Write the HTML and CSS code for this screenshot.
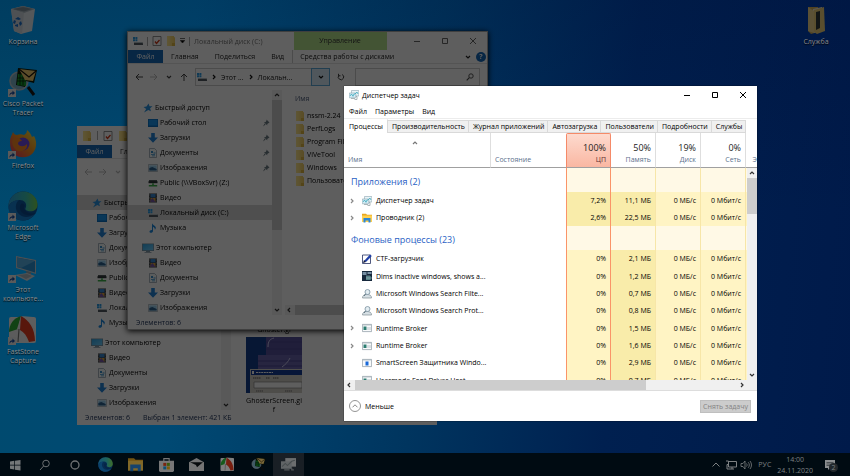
FILE: index.html
```html
<!DOCTYPE html>
<html lang="ru">
<head>
<meta charset="utf-8">
<meta name="viewport" content="width=device-width, initial-scale=1">
<title>Диспетчер задач</title>
<link rel="stylesheet" href="styles.css">
</head>
<body>
<svg class="defs" aria-hidden="true">
  <defs>
    <linearGradient id="g-edge" x1="0" y1="0" x2="1" y2="0"><stop offset="0" stop-color="#2aa8e8"/><stop offset=".6" stop-color="#3cc8b8"/><stop offset="1" stop-color="#7ddc50"/></linearGradient>
    <linearGradient id="g-fox" x1="1" y1="0" x2="0" y2="1"><stop offset="0" stop-color="#fff04a"/><stop offset=".45" stop-color="#ff9a1c"/><stop offset="1" stop-color="#f0306a"/></linearGradient>
    <linearGradient id="g-folder" x1="0" y1="0" x2="1" y2="0"><stop offset="0" stop-color="#ffe890"/><stop offset="1" stop-color="#f0cc60"/></linearGradient>
    <linearGradient id="g-screen" x1="0" y1="0" x2="1" y2="1"><stop offset="0" stop-color="#30a8e8"/><stop offset="1" stop-color="#70d0ff"/></linearGradient>
    <symbol id="shortcut" viewBox="0 0 8 8"><path d="M0 0h8v8H0z" fill="#f4f4f4"/><path d="M1.500 7c-.3-2.500 1-3.700 3-3.700V1.500L7 4 4.500 6.300V4.800C3.200 4.700 2.200 5.300 1.500 7z" fill="#1a50a8"/></symbol>
    <symbol id="bin" viewBox="0 0 30 30"><path d="M3 4l12-3 12 3-3 22-11 3-7-3z" fill="#e6edf2"/><path d="M3 4l12-3 12 3-11 4z" fill="#aebcc6"/><path d="M5 4l10-2 9 2-8 2.500z" fill="#82929d"/><path d="M16 8l-2 21-8-3L3 4z" fill="#d2dce3"/><path d="M7 14l3-2 3 2-2 1zM6 15l2 1-1 3-2-1zM13 16l1 3-2 2-1-3zM7 20l3-1v3l-3-1z" fill="#1c72d0"/></symbol>
    <symbol id="cisco" viewBox="0 0 30 30"><path d="M20 20l6 8" stroke="#151515" stroke-width="3"/><circle cx="11" cy="14" r="9" fill="#7eb4cc" stroke="#b9c9d0" stroke-width="1.500"/><path d="M10 1l19 2-3 13-8-2-1 6-9-2z" fill="#0b1a08"/><path d="M10 7l8 1v11l-9-1z" fill="#14a02c"/><path d="M12 7v11M15 7v11M9 11h9M9 14h9" stroke="#0b1a08" stroke-width=".8"/><path d="M11 2l17 2-3 10-8-1z" fill="#f5cf72"/><path d="M11 2l10 8 7-6" fill="none" stroke="#16120a" stroke-width="1.200"/></symbol>
    <symbol id="firefox" viewBox="0 0 30 30"><path d="M2 13C2 8 4 6 5 3c1 2 2 3 4 3 2-1 5-1 7 0 2-1 3-3 3-5 3 2 4 5 5 7l2-1c3 5 3 12-1 17-4 5-14 6-19 1-3-3-4-7-4-12z" fill="url(#g-fox)"/><circle cx="15" cy="15" r="6.500" fill="#7048e8"/><path d="M5 10c4-2 7-1 9 2-3 0-4 1-4 3 2 3 6 3 9 0 1 5-4 8-8 7-5-1-8-7-6-12z" fill="#ff8a24"/></symbol>
    <symbol id="edge" viewBox="0 0 30 30"><circle cx="15" cy="15" r="14.500" fill="#0c59a4"/><path d="M.5 16C0 7 7 .5 15 .5c9 0 15 7 14.500 14C29 19 25 21 20 20c-3-1-3-2-2-4 1-4-2-7-6-7C7 9 2 11 .5 16z" fill="url(#g-edge)"/><path d="M.5 17C1 12 6 9 11 9c-4 3-4 9-1 13 4 5 11 5 17 1-3 4-7 6.500-12 6.500C7 29.500 1 24 .5 17z" fill="#1684d8"/><path d="M13 13c-3 4 0 10 6 11 3 .5 6 0 9-2-5 1-9 0-11-3-2-2-1-3 0-4-1-2-2-3-4-2z" fill="#0b4a90"/></symbol>
    <symbol id="thispc" viewBox="0 0 30 30"><path d="M8 3l20 4v14L8 15z" fill="#c8d4dc"/><path d="M9 4.500l18 3.500v11.500L9 14z" fill="#2c94d8"/><path d="M9 4.500l18 3.500-14 7-4-1z" fill="#58b4ec"/><path d="M18 18l1 5h4v-4z" fill="#9eabb4"/><path d="M7 22l12-2 8 3-8 5z" fill="#dce3e8"/><path d="M10 22l9-1 5 2-6 3z" fill="#aebac2"/></symbol>
    <symbol id="fast" viewBox="0 0 30 30"><rect x="1" y="2" width="27" height="26" rx="2" fill="#f8f8f8"/><path d="M13 1C6 3 1 9 1 17l9-3z" fill="#2db335"/><path d="M13 1l-4 13 3 1 6-2z" fill="#f4f4f4"/><path d="M13 1l-1 14c4 2 7 6 9 12l6-1C27 14 21 5 13 1z" fill="#ee3d20"/><path d="M13 1c7 3 12 9 15 14V4l-3-2z" fill="#fff"/><path d="M11 14l-1 13" stroke="#808080" stroke-width="1.200"/></symbol>
    <symbol id="bigfolder" viewBox="0 0 30 30"><path d="M7 2h10v25l-7 2-3-3z" fill="#d8b45c"/><path d="M12 4l9-2v22l-8 4z" fill="#f7f4e4"/><path d="M13 5l10-3 1 24-8 3-3-2z" fill="#f1d37c"/><path d="M15 7l4-1v17l-4 2z" fill="#303838"/><path d="M7 2l6 4v22l-6-2z" fill="#f5dc92"/></symbol>
    <symbol id="star" viewBox="0 0 10 10"><path d="M5.500.5l1 2.700 3 .1-2.400 2 .8 3L5.300 7 1 9.500 3.200 6 .5 4l3-.5z" fill="#2892e0"/></symbol>
    <symbol id="desk" viewBox="0 0 10 10"><path d="M0 1h10v8H0z" fill="#0b6fc0"/><path d="M.7 1.700h8.600v5.800H.7z" fill="#1795ee"/></symbol>
    <symbol id="down" viewBox="0 0 10 10"><path d="M3.200 0h3.600v4.500H10L5 9.800 0 4.500h3.200z" fill="#2484d8"/></symbol>
    <symbol id="doc" viewBox="0 0 10 10"><path d="M1.500.5h5l2 2v7h-7z" fill="#f6fafc" stroke="#8798a4" stroke-width=".7"/><path d="M3 3h2v2H3zM5.500 4.500h2v1h-2zM3 6h4v.8H3zM4 7.500h3v.8H4z" fill="#3a8ecc"/></symbol>
    <symbol id="pic" viewBox="0 0 10 10"><path d="M.4 1.500h9.200v7H.4z" fill="#f3f7fa" stroke="#99a8b0" stroke-width=".7"/><path d="M1.300 2.400h7.400v5.200H1.300z" fill="#9ed4f4"/><path d="M1.300 5l3-1 4.400 2v1.600H1.300z" fill="#2b6090"/></symbol>
    <symbol id="net" viewBox="0 0 10 10"><path d="M1 2h8v3H1z" fill="#505a5c"/><path d="M.5 3.200h9v2h-9z" fill="#2b3436"/><path d="M4.200 5.200h1.600v2H4.200zM.8 7h8.400v1.600H.8z" fill="#3cb04a"/></symbol>
    <symbol id="video" viewBox="0 0 10 10"><path d="M1 .5h8v9H1z" fill="#303438"/><path d="M2.500 1h5v3.500h-5z" fill="#3686d0"/><path d="M2.500 5h5v4h-5z" fill="#dca43c"/><path d="M2.500 7l2-2 3 4h-5z" fill="#7858a8"/><path d="M1.700 1v8M8.300 1v8" stroke="#ddd" stroke-width=".6" stroke-dasharray=".7 .8"/></symbol>
    <symbol id="drive" viewBox="0 0 10 10"><path d="M0 1h2v2H0zM2.400 1h2v2h-2zM0 3.300h2v2H0zM2.400 3.300h2v2h-2z" fill="#2b9ee6"/><path d="M1 6h8l1 1.500V9H1z" fill="#505a60"/><path d="M1 6h8l.7 1H1z" fill="#b2bcc2"/></symbol>
    <symbol id="music" viewBox="0 0 10 10"><path d="M4 .3c.5 1.800 3 2 3.700 3.700.3 1-.1 2-.8 2.800.1-1.600-.8-2.300-1.900-2.700V8c0 1-.9 1.800-2 1.800S1.500 9.200 1.500 8.500 2.500 7 4 7.100z" fill="#1c8ae0"/></symbol>
    <symbol id="pc" viewBox="0 0 12 10"><path d="M0 .5h12v7.500H0z" fill="#7894a6"/><path d="M.8 1.200h10.400v6H.8z" fill="url(#g-screen)"/><path d="M4 8h4v1h1.500v.8h-7V9H4z" fill="#8298a4"/></symbol>
    <symbol id="folder" viewBox="0 0 10 10"><path d="M1 0h7v1l1 .5V10H1z" fill="url(#g-folder)"/><path d="M6 7h3v3H6z" fill="#e0b840"/></symbol>
    <symbol id="check" viewBox="0 0 10 10"><path d="M1 .5h8v9H1z" fill="#fff" stroke="#777" stroke-width=".8"/><path d="M3 5.500l1.500 2L7.500 4" fill="none" stroke="#d03818" stroke-width="1.300"/></symbol>
    <symbol id="pin" viewBox="0 0 8 8"><path d="M4.500.5l3 3-.8.4-1.500 1 .1 1.600L2 3.200l1.700-.1L4.500 1.500zM2.600 4.500l1 1L1 7.500z" fill="#6c7c84"/></symbol>
    <symbol id="left" viewBox="0 0 8 8"><path d="M4 1L1 4l3 3M1 4h7" fill="none" stroke="currentColor"/></symbol>
    <symbol id="right" viewBox="0 0 8 8"><path d="M4 1l3 3-3 3M0 4h7" fill="none" stroke="currentColor"/></symbol>
    <symbol id="up" viewBox="0 0 8 8"><path d="M1 4l3-3 3 3M4 1v7" fill="none" stroke="currentColor"/></symbol>
    <symbol id="cdown" viewBox="0 0 8 8"><path d="M2 3L4 5 6 3" fill="none" stroke="currentColor" stroke-width="1.200"/></symbol>
    <symbol id="cup" viewBox="0 0 8 8"><path d="M2 5L4 3 6 5" fill="none" stroke="currentColor" stroke-width="1.200"/></symbol>
    <symbol id="cright" viewBox="0 0 8 8"><path d="M3 2L5 4 3 6" fill="none" stroke="currentColor" stroke-width="1.200"/></symbol>
    <symbol id="cleft" viewBox="0 0 8 8"><path d="M5 2L3 4 5 6" fill="none" stroke="currentColor" stroke-width="1.200"/></symbol>
    <symbol id="refresh" viewBox="0 0 8 8"><path d="M2 2.200A2.700 2.700 0 1 0 5 1.500M1.500.8v2h2" fill="none" stroke="currentColor"/></symbol>
    <symbol id="lens" viewBox="0 0 8 8"><circle cx="5" cy="3" r="2.200" fill="none" stroke="currentColor" stroke-width=".9"/><path d="M3.300 4.700L.7 7.300" stroke="currentColor" stroke-width="1.100"/></symbol>
    <symbol id="min" viewBox="0 0 8 8"><path d="M1 4.500h6" stroke="currentColor"/></symbol>
    <symbol id="max" viewBox="0 0 8 8"><path d="M1.500 1.500h5v5h-5z" fill="none" stroke="currentColor"/></symbol>
    <symbol id="close" viewBox="0 0 8 8"><path d="M1 1l6 6M7 1L1 7" stroke="currentColor"/></symbol>
    <symbol id="tm" viewBox="0 0 10 10"><path d="M2.500.5h7.300v5.500H2.500z" fill="#e8f4f8" stroke="#8ca4b0" stroke-width=".6"/><path d="M.3 3h6.500v4.800H.3z" fill="#d4ecf4" stroke="#8ca4b0" stroke-width=".6"/><path d="M1 6l1.500-2 1.500 2.300L5 4h1l2-2 1 2" fill="none" stroke="#2aa0b8" stroke-width=".7"/><path d="M2 8.500h4M7 6.500h1v3H5.500" stroke="#98a4a8" stroke-width=".8" fill="none"/></symbol>
    <symbol id="tm-bar" viewBox="0 0 14 14"><path d="M4 1h10v8H4z" fill="#d8dcde"/><path d="M0 4h10v7H0z" fill="#c0c8cc"/><path d="M1 9l3-3 2 2 4-4 3-1" fill="none" stroke="#8c989c"/><path d="M3 12h5M10 10v2h2" fill="none" stroke="#a8b0b4"/></symbol>
    <symbol id="explorer" viewBox="0 0 10 10"><path d="M0 .8h4l1 1h5V9H0z" fill="#e8a820"/><path d="M0 2.500h10V9H0z" fill="#ffd050"/><path d="M1.500 5h7v4.500h-2v-2h-3v2h-2z" fill="#2a86d8"/></symbol>
    <symbol id="ctf" viewBox="0 0 10 10"><path d="M.5 1h8v8.500h-8z" fill="#fff" stroke="#243060" stroke-width=".8"/><path d="M2 7l6-6.500L9.800 2 4 8z" fill="#2040a8"/><path d="M1 9l1-3 2 2z" fill="#101838"/></symbol>
    <symbol id="dims" viewBox="0 0 10 10"><path d="M0 0h10v10H0z" fill="#16283c"/><path d="M.5 1h4v3h-4zM5.500 1h4v2h-4z" fill="#7890a4"/><path d="M4 5h5v4H4z" fill="#376c70"/><path d="M5 4v5M7 4v5M4 7h6" stroke="#b8c8d0" stroke-width=".5"/></symbol>
    <symbol id="person" viewBox="0 0 10 10"><path d="M.5 9C.5 6.500 2 5.500 5 5.500s4.500 1 4.500 3.500z" fill="#d7e0e5" stroke="#7f8c94" stroke-width=".7"/><circle cx="5.500" cy="3" r="2.500" fill="#e3edf2" stroke="#7990a0" stroke-width=".8"/><path d="M3.500 5L2 7" stroke="#58707e"/></symbol>
    <symbol id="app" viewBox="0 0 10 10"><path d="M.4 1.400h9.200v7.200H.4z" fill="#f8fafb" stroke="#95a2aa" stroke-width=".8"/><path d="M.4 1.400h9.200v1H.4z" fill="#adb8c0"/><path d="M1.500 3.500h3v3.500h-3z" fill="#2c7c70"/><path d="M5.500 4h1v3h-1zM7.500 4h1v3h-1z" fill="#bac4ca"/></symbol>
    <symbol id="smart" viewBox="0 0 10 10"><path d="M.4 1.400h9.200v7.200H.4z" fill="#f8fafb" stroke="#95a2aa" stroke-width=".8"/><path d="M.4 1.400h9.200v1H.4z" fill="#adb8c0"/><path d="M3.500 3.500h3v4h-3z" fill="#1868d8"/></symbol>
  </defs>
</svg>

<div class="screen">
  <main class="desktop">
    <ul class="icons">
      <li><svg class="big dimmed"><use href="#bin"/></svg><span>Корзина</span></li>
      <li><svg class="big dimmed"><use href="#cisco"/></svg><svg class="link-mark dimmed"><use href="#shortcut"/></svg><span>Cisco Packet<br>Tracer</span></li>
      <li><svg class="big dimmed"><use href="#firefox"/></svg><svg class="link-mark dimmed"><use href="#shortcut"/></svg><span>Firefox</span></li>
      <li><svg class="big dimmed"><use href="#edge"/></svg><svg class="link-mark dimmed"><use href="#shortcut"/></svg><span>Microsoft<br>Edge</span></li>
      <li><svg class="big dimmed"><use href="#thispc"/></svg><svg class="link-mark dimmed"><use href="#shortcut"/></svg><span>Этот<br>компьюте...</span></li>
      <li><svg class="big dimmed"><use href="#fast"/></svg><svg class="link-mark dimmed"><use href="#shortcut"/></svg><span>FastStone<br>Capture</span></li>
    </ul>
    <ul class="icons">
      <li><svg class="big dimmed"><use href="#bigfolder"/></svg><span>Служба</span></li>
    </ul>
  </main>

  <section class="window explorer back dimmed" aria-label="Проводник">
    <header class="titlebar">
      <svg class="i"><use href="#folder"/></svg><span class="sep"></span><svg class="i"><use href="#check"/></svg><svg class="i"><use href="#folder"/></svg>
    </header>
    <nav class="ribbon"><button class="file">Файл</button><button>Главная</button></nav>
    <div class="address faded"><svg class="s"><use href="#left"/></svg><svg class="s"><use href="#right"/></svg><svg class="s"><use href="#cdown"/></svg></div>
    <div class="body">
      <ul class="tree">
        <li class="root selected"><svg class="i"><use href="#star"/></svg>Быстрый доступ</li>
        <li><svg class="i"><use href="#desk"/></svg>Рабочий стол</li>
        <li><svg class="i"><use href="#down"/></svg>Загрузки</li>
        <li><svg class="i"><use href="#doc"/></svg>Документы</li>
        <li><svg class="i"><use href="#pic"/></svg>Изображения</li>
        <li><svg class="i"><use href="#net"/></svg>Public (\\VBoxSvr) (Z:)</li>
        <li><svg class="i"><use href="#video"/></svg>Видео</li>
        <li><svg class="i"><use href="#drive"/></svg>Локальный диск (C:)</li>
        <li><svg class="i"><use href="#music"/></svg>Музыка</li>
        <li class="root gap"><svg class="i wide"><use href="#pc"/></svg>Этот компьютер</li>
        <li><svg class="i"><use href="#video"/></svg>Видео</li>
        <li><svg class="i"><use href="#doc"/></svg>Документы</li>
        <li><svg class="i"><use href="#down"/></svg>Загрузки</li>
        <li><svg class="i"><use href="#pic"/></svg>Изображения</li>
      </ul>
      <div class="vbar"><svg class="s"><use href="#cup"/></svg><span class="thumb"></span><svg class="s"><use href="#cdown"/></svg></div>
      <div class="thumbs">
        <figure>
          <figcaption>Ghoster.gi</figcaption>
        </figure>
        <figure>
          <svg class="preview" viewBox="0 0 56 56"><path d="M0 0h56v56H0z" fill="#123e8c"/><path d="M20 0h36v18H20z" fill="#56509c"/><path d="M12 18h44v14H12z" fill="#6a64ae"/><path d="M20 5h36M20 12h36M12 24h44M12 29h44" stroke="#4a4690"/><path d="M22 10C22 4 24 2 28 1M36 30c4-3 6-5 8-9" fill="none" stroke="#c8c8f0"/><path d="M4 32h52v24H4z" fill="#d4d0c8"/><path d="M5 33h51v5H5z" fill="#143c98"/><path d="M6 34h2v3H6z" fill="#fff"/><path d="M10 35.500h17" stroke="#fff" stroke-dasharray="2 .6"/><path d="M7 41h8M20 41h4M27 41h6" stroke="#555" stroke-dasharray="1.500 .5"/><path d="M8 45h48v6H8z" fill="#fff" stroke="#777" stroke-width=".6"/><path d="M10 54h7M39 54h7" stroke="#777" stroke-dasharray="1.500 .5"/></svg>
          <figcaption>GhosterScreen.gi<br>f</figcaption>
        </figure>
      </div>
    </div>
    <footer class="status"><span>Элементов: 6</span><span>Выбран 1 элемент: 421 КБ</span></footer>
  </section>

  <section class="window explorer front dimmed" aria-label="Локальный диск (C:)">
    <header class="titlebar">
      <svg class="i"><use href="#drive"/></svg><span class="sep"></span><svg class="i"><use href="#check"/></svg><svg class="i"><use href="#folder"/></svg><svg class="caret" viewBox="0 0 5 6"><path d="M0 .5h5M.3 2.500h4.400L2.500 5z" stroke="#333" stroke-width=".7"/></svg><span class="sep"></span>
      <h2>Локальный диск (C:)</h2>
      <span class="context">Управление</span>
      <div class="controls"><button aria-label="Свернуть"><svg class="s"><use href="#min"/></svg></button><button aria-label="Развернуть"><svg class="s"><use href="#max"/></svg></button><button aria-label="Закрыть"><svg class="s"><use href="#close"/></svg></button></div>
    </header>
    <nav class="ribbon"><button class="file">Файл</button><button>Главная</button><button>Поделиться</button><button>Вид</button><button class="tools">Средства работы с дисками</button><span class="help"><svg class="s"><use href="#cdown"/></svg><b>?</b></span></nav>
    <div class="address">
      <svg class="s"><use href="#left"/></svg><svg class="s pale"><use href="#right"/></svg><svg class="s"><use href="#cdown"/></svg><svg class="s"><use href="#up"/></svg>
      <div class="path"><svg class="i"><use href="#drive"/></svg><svg class="s"><use href="#cright"/></svg><span>Этот ...</span><svg class="s"><use href="#cright"/></svg><span>Локальн...</span><button aria-label="Предыдущие расположения"><svg class="s"><use href="#cdown"/></svg></button></div>
      <button class="reload" aria-label="Обновить"><svg class="s"><use href="#refresh"/></svg></button>
      <label class="search"><input type="text" aria-label="Поиск"><svg class="s"><use href="#lens"/></svg></label>
    </div>
    <div class="body">
      <ul class="tree">
        <li class="root"><svg class="i"><use href="#star"/></svg>Быстрый доступ</li>
        <li><svg class="i"><use href="#desk"/></svg>Рабочий стол<svg class="s pin"><use href="#pin"/></svg></li>
        <li><svg class="i"><use href="#down"/></svg>Загрузки<svg class="s pin"><use href="#pin"/></svg></li>
        <li><svg class="i"><use href="#doc"/></svg>Документы<svg class="s pin"><use href="#pin"/></svg></li>
        <li><svg class="i"><use href="#pic"/></svg>Изображения<svg class="s pin"><use href="#pin"/></svg></li>
        <li><svg class="i"><use href="#net"/></svg>Public (\\VBoxSvr) (Z:)</li>
        <li><svg class="i"><use href="#video"/></svg>Видео</li>
        <li class="selected"><svg class="i"><use href="#drive"/></svg>Локальный диск (C:)</li>
        <li><svg class="i"><use href="#music"/></svg>Музыка</li>
        <li class="root gap"><svg class="i wide"><use href="#pc"/></svg>Этот компьютер</li>
        <li><svg class="i"><use href="#video"/></svg>Видео</li>
        <li><svg class="i"><use href="#doc"/></svg>Документы</li>
        <li><svg class="i"><use href="#down"/></svg>Загрузки</li>
        <li><svg class="i"><use href="#pic"/></svg>Изображения</li>
      </ul>
      <div class="vbar"><svg class="s"><use href="#cup"/></svg><span class="thumb"></span><svg class="s"><use href="#cdown"/></svg></div>
      <div class="files">
        <p class="colname">Имя</p>
        <ul>
          <li><svg class="i"><use href="#folder"/></svg>nssm-2.24</li>
          <li><svg class="i"><use href="#folder"/></svg>PerfLogs</li>
          <li><svg class="i"><use href="#folder"/></svg>Program Files</li>
          <li><svg class="i"><use href="#folder"/></svg>ViVeTool</li>
          <li><svg class="i"><use href="#folder"/></svg>Windows</li>
          <li><svg class="i"><use href="#folder"/></svg>Пользователи</li>
        </ul>
        <div class="hbar"><svg class="s"><use href="#cleft"/></svg><span class="thumb"></span></div>
      </div>
    </div>
    <footer class="status"><span>Элементов: 6</span></footer>
  </section>

  <section class="window manager" aria-label="Диспетчер задач">
    <header class="titlebar">
      <svg class="i"><use href="#tm"/></svg>
      <h1>Диспетчер задач</h1>
      <div class="controls"><button aria-label="Свернуть"><svg class="s"><use href="#min"/></svg></button><button aria-label="Развернуть"><svg class="s"><use href="#max"/></svg></button><button aria-label="Закрыть"><svg class="s"><use href="#close"/></svg></button></div>
    </header>
    <nav class="menu"><button>Файл</button><button>Параметры</button><button>Вид</button></nav>
    <div class="tabs" role="tablist">
      <button role="tab" aria-selected="true">Процессы</button><button role="tab">Производительность</button><button role="tab">Журнал приложений</button><button role="tab">Автозагрузка</button><button role="tab">Пользователи</button><button role="tab">Подробности</button><button role="tab">Службы</button>
    </div>
    <div class="list">
      <table>
        <colgroup><col class="c-name"><col class="c-state"><col class="c-num"><col class="c-num"><col class="c-num"><col class="c-num"><col class="c-more"></colgroup>
        <thead>
          <tr><th><svg class="s sort"><use href="#cup"/></svg>Имя</th><th>Состояние</th><th class="cpu"><b>100%</b>ЦП</th><th><b>50%</b>Память</th><th><b>19%</b>Диск</th><th><b>0%</b>Сеть</th><th>Э</th></tr>
        </thead>
        <tbody>
          <tr class="group"><th colspan="2">Приложения (2)</th><td></td><td></td><td></td><td></td><td></td></tr>
          <tr><td><span class="proc"><svg class="s"><use href="#cright"/></svg><svg class="i"><use href="#tm"/></svg>Диспетчер задач</span></td><td></td><td class="hot">7,2%</td><td class="hot">11,1 МБ</td><td>0 МБ/с</td><td>0 Мбит/с</td><td></td></tr>
          <tr><td><span class="proc"><svg class="s"><use href="#cright"/></svg><svg class="i"><use href="#explorer"/></svg>Проводник (2)</span></td><td></td><td class="hot">2,6%</td><td class="hot">22,5 МБ</td><td>0 МБ/с</td><td>0 Мбит/с</td><td></td></tr>
        </tbody>
        <tbody>
          <tr class="group"><th colspan="2">Фоновые процессы (23)</th><td></td><td></td><td></td><td></td><td></td></tr>
          <tr><td><span class="proc"><svg class="s"></svg><svg class="i"><use href="#ctf"/></svg>CTF-загрузчик</span></td><td></td><td>0%</td><td class="hot">2,1 МБ</td><td>0 МБ/с</td><td>0 Мбит/с</td><td></td></tr>
          <tr><td><span class="proc"><svg class="s"></svg><svg class="i"><use href="#dims"/></svg>Dims inactive windows, shows a...</span></td><td></td><td>0%</td><td class="hot">1,2 МБ</td><td>0 МБ/с</td><td>0 Мбит/с</td><td></td></tr>
          <tr><td><span class="proc"><svg class="s"></svg><svg class="i"><use href="#person"/></svg>Microsoft Windows Search Filte...</span></td><td></td><td>0%</td><td class="hot">0,7 МБ</td><td>0 МБ/с</td><td>0 Мбит/с</td><td></td></tr>
          <tr><td><span class="proc"><svg class="s"></svg><svg class="i"><use href="#person"/></svg>Microsoft Windows Search Prot...</span></td><td></td><td>0%</td><td class="hot">0,8 МБ</td><td>0 МБ/с</td><td>0 Мбит/с</td><td></td></tr>
          <tr><td><span class="proc"><svg class="s"><use href="#cright"/></svg><svg class="i"><use href="#app"/></svg>Runtime Broker</span></td><td></td><td>0%</td><td class="hot">1,5 МБ</td><td>0 МБ/с</td><td>0 Мбит/с</td><td></td></tr>
          <tr><td><span class="proc"><svg class="s"><use href="#cright"/></svg><svg class="i"><use href="#app"/></svg>Runtime Broker</span></td><td></td><td>0%</td><td class="hot">1,6 МБ</td><td>0 МБ/с</td><td>0 Мбит/с</td><td></td></tr>
          <tr><td><span class="proc"><svg class="s"></svg><svg class="i"><use href="#smart"/></svg>SmartScreen Защитника Windo...</span></td><td></td><td>0%</td><td class="hot">2,9 МБ</td><td>0 МБ/с</td><td>0 Мбит/с</td><td></td></tr>
          <tr><td><span class="proc"><svg class="s"></svg><svg class="i"><use href="#app"/></svg>Usermode Font Driver Host</span></td><td></td><td>0%</td><td class="hot">0,7 МБ</td><td>0 МБ/с</td><td>0 Мбит/с</td><td></td></tr>
        </tbody>
      </table>
      <div class="vbar"><svg class="s"><use href="#cup"/></svg><span class="thumb"></span><svg class="s"><use href="#cdown"/></svg></div>
    </div>
    <div class="hbar"><svg class="s"><use href="#cleft"/></svg><span class="thumb"></span><svg class="s"><use href="#cright"/></svg></div>
    <footer class="actions">
      <button class="less"><svg viewBox="0 0 14 14"><circle cx="7" cy="7" r="5.500" fill="none" stroke="#888" stroke-width=".9"/><path d="M4.500 8.300L7 5.800l2.500 2.500" fill="none" stroke="#888"/></svg>Меньше</button>
      <button class="end" disabled>Снять задачу</button>
    </footer>
  </section>

  <footer class="taskbar">
    <div class="system">
      <button aria-label="Пуск"><svg viewBox="0 0 12 12"><path d="M1 2.500l4.300-.7v4H1zM6 1.700L11.500 1v4.800H6zM1 6.500h4.300v4L1 9.800zM6 6.500h5.500v5L6 10.700z" fill="#737779"/></svg></button>
      <button aria-label="Поиск"><svg viewBox="0 0 12 12"><circle cx="7" cy="4.500" r="3.300" fill="none" stroke="#6b6f71"/><path d="M4.600 7L1 11" stroke="#6b6f71"/></svg></button>
      <button aria-label="Кортана"><svg viewBox="0 0 12 12"><circle cx="6" cy="6" r="4" fill="none" stroke="#6e7274" stroke-width="1.300"/></svg></button>
    </div>
    <div class="apps">
      <button aria-label="Edge"><svg class="lit l"><use href="#edge"/></svg></button>
      <button aria-label="Проводник"><svg class="lit l"><use href="#explorer"/></svg></button>
      <button aria-label="Store"><svg class="lit l" viewBox="0 0 14 14"><path d="M4.500 4V1.500h5V4" fill="none" stroke="#eee"/><path d="M0 3.500h14V13l-1 1H1l-1-1z" fill="#eee"/><path d="M4 5.500h2.800v2.800H4z" fill="#f04a20"/><path d="M7.300 5.500h2.800v2.800H7.300z" fill="#78b818"/><path d="M4 8.800h2.800v2.800H4z" fill="#18a0e8"/><path d="M7.300 8.800h2.800v2.800H7.300z" fill="#f8b810"/></svg></button>
      <button aria-label="Почта"><svg class="lit l" viewBox="0 0 14 14"><path d="M0 5l7-4 7 4v8H0z" fill="#e8e8e8"/><path d="M1 5h12L7.500 9.500l-1-2z" fill="#10161a"/></svg></button>
      <button aria-label="FastStone"><svg class="lit l"><use href="#fast"/></svg></button>
      <button aria-label="Packet Tracer"><svg class="lit l"><use href="#cisco"/></svg></button>
      <button class="active" aria-label="Диспетчер задач"><svg class="lit l"><use href="#tm-bar"/></svg></button>
    </div>
    <div class="tray">
      <svg viewBox="0 0 12 12"><path d="M2.500 7.500L6 4l3.500 3.500" fill="none" stroke="currentColor"/></svg>
      <svg viewBox="0 0 12 12"><path d="M3.500 2.500h8v5.500h-8zM1 2h2.500v3.500H2V10h7M7 8v2" fill="none" stroke="currentColor"/></svg>
      <svg viewBox="0 0 12 12"><path d="M1 4.500h2L5 2v8L3 7.500H1zM6.500 4.500c.8 1 .8 2 0 3M8.200 3.200c1.500 1.800 1.500 3.800 0 5.600M10 2c2 2.500 2 5.500 0 8" fill="none" stroke="currentColor" stroke-width=".8"/></svg>
      <span class="lang">РУС</span>
      <time>14:00<br>24.11.2020</time>
      <span class="notes"><svg viewBox="0 0 12 12"><path d="M1 1h10v8H6l-2 2V9H1z" fill="#8b8e90"/><path d="M2.500 3.500h7M2.500 5h7M2.500 6.500h7" stroke="#22282c" stroke-width=".6"/></svg><b>2</b></span>
    </div>
  </footer>
</div>
</body>
</html>
```
FILE: styles.css
```css
* { box-sizing: border-box; }

body {
  margin: 0;
  font: 7px/9px "Open Sans", "Noto Sans", sans-serif;
  color: #000;
}

h1, h2, p, ul, figure { margin: 0; padding: 0; }
h1, h2 { font-size: inherit; font-weight: 400; }
ul { list-style: none; }

button {
  margin: 0;
  padding: 0;
  border: 0;
  background: none;
  font: inherit;
  color: inherit;
  white-space: nowrap;
}

svg { display: block; flex: none; }
.defs { position: absolute; width: 0; height: 0; }
.i { width: 10px; height: 10px; }
.wide { width: 12px; }
.s { width: 8px; height: 8px; }
.dimmed { filter: brightness(.37); }
.lit { filter: brightness(.5); }

.screen {
  position: relative;
  display: flex;
  flex-direction: column;
  min-height: 100vh;
  overflow: hidden;
  background:
    linear-gradient(180deg, rgba(0, 10, 40, .2), transparent 45%),
    linear-gradient(95deg, #004a6e 0%, #004a74 22%, #00355f 50%, #002050 72%, #001a4a 100%);
}

/* Desktop icons */
.desktop {
  flex: 1;
  display: flex;
  justify-content: space-between;
  padding: 5px 11px 0 0;
}
.icons li {
  position: relative;
  display: flex;
  flex-direction: column;
  align-items: center;
  gap: 2px;
  width: 46px;
  height: 62px;
  color: #8c8c8c;
  text-align: center;
  text-shadow: 0 1px 1px #000;
  white-space: nowrap;
}
.big { width: 30px; height: 30px; }
.link-mark {
  position: absolute;
  left: 8px;
  top: 22px;
  width: 8px;
  height: 8px;
}

/* Windows */
.window {
  position: absolute;
  display: flex;
  flex-direction: column;
  background: #fff;
}
.back { left: 77px; top: 126px; width: 360px; height: 299px; }
.front {
  left: 127px;
  top: 31px;
  width: 361px;
  height: 299px;
  border: 1px solid #aaa;
  box-shadow: 0 1px 6px #000;
}
.manager {
  left: 344px;
  top: 86px;
  width: 413px;
  height: 335px;
  box-shadow: 0 0 1px #000;
}
.titlebar {
  display: flex;
  align-items: center;
  gap: 5px;
  height: 18px;
  padding-left: 5px;
}
.controls { display: flex; margin-left: auto; }
.controls button {
  display: grid;
  place-items: center;
  width: 28px;
  height: 18px;
}

.explorer .sep { width: 1px; height: 9px; background: #aaa; }
.front .titlebar { gap: 4px; }
.explorer h2 { color: #777; }
.explorer .controls { color: #666; }
.explorer.back .titlebar { height: 19px; }
.caret { width: 5px; height: 6px; }
.context {
  align-self: stretch;
  width: 93px;
  margin-left: 27px;
  line-height: 18px;
  text-align: center;
  color: #333;
  background: #b5e28c;
}
.ribbon { display: flex; height: 14px; color: #222; border-bottom: 1px solid #e4e4e4; }
.ribbon button { padding: 0 8px; }
.ribbon .file { width: 35px; color: #fff; background: #1569b8; }
.ribbon .tools { padding: 0 7px; border-left: 1px solid #ccc; }
.help { display: flex; align-items: center; gap: 4px; margin-left: auto; padding-right: 1px; }
.help b {
  width: 10px;
  height: 10px;
  border-radius: 50%;
  line-height: 10px;
  text-align: center;
  color: #fff;
  background: #1468b8;
}
.address {
  display: flex;
  align-items: center;
  gap: 7px;
  height: 26px;
  padding: 0 7px;
  color: #444;
}
.faded, .pale { color: #bbb; }
.back .address { height: 36px; padding-bottom: 10px; }
.path {
  display: flex;
  align-items: center;
  gap: 3px;
  width: 135px;
  height: 18px;
  padding-left: 1px;
  border: 1px solid #ccc;
  color: #111;
}
.path button {
  display: grid;
  place-items: center;
  width: 19px;
  height: 18px;
  margin-left: auto;
  margin-right: -1px;
  border: 1px solid #58a8d8;
  background: #d8ecf8;
}
.search {
  display: flex;
  align-items: center;
  flex: 1;
  height: 18px;
  margin-left: 3px;
  padding-right: 5px;
  border: 1px solid #ccc;
}
.search input { flex: 1; min-width: 0; border: 0; background: none; font: inherit; }

.body { display: flex; flex: 1; min-height: 0; }
.tree { width: 144px; padding-top: 10px; }
.back .tree { padding-top: 0; }
.tree li {
  display: flex;
  align-items: center;
  gap: 2px;
  height: 15px;
  padding-left: 20px;
  white-space: nowrap;
}
.tree .root { padding-left: 15px; }
.tree .gap { margin-top: 5px; padding-left: 14px; }
.selected { background: #d5d5d5; }
.pin { margin-left: auto; margin-right: 2px; }

.vbar {
  display: flex;
  flex-direction: column;
  align-items: center;
  justify-content: space-between;
  width: 10px;
  padding: 1px 0;
  background: #f0f0f0;
  color: #333;
}
.vbar .thumb { width: 100%; background: #cdcdcd; }
.front .vbar .thumb { height: 130px; margin-bottom: auto; margin-top: 1px; }
.hbar { display: flex; align-items: center; height: 10px; background: #f0f0f0; color: #333; }
.hbar .thumb { height: 100%; background: #cdcdcd; }

.files { display: flex; flex-direction: column; flex: 1; padding-left: 3px; }
.colname { padding: 4px 0 6px 10px; color: #4a5a78; }
.files li {
  display: flex;
  align-items: center;
  gap: 2px;
  height: 13px;
  padding-left: 10px;
}
.files .hbar { margin-top: auto; }
.files .thumb { flex: 1; margin-left: 2px; }
.status {
  display: flex;
  align-items: center;
  gap: 13px;
  height: 15px;
  padding-left: 8px;
  color: #1c3058;
}
.front .status { height: 14px; }
.thumbs {
  display: flex;
  flex-direction: column;
  justify-content: flex-end;
  padding-left: 7px;
}
.thumbs figure { width: 72px; text-align: center; margin-bottom: 3px; }
.thumbs figure + figure { margin-bottom: -4px; }
.preview { width: 56px; height: 56px; margin: 0 auto 3px; }

/* Task manager */
.manager .titlebar { gap: 3px; }
.menu {
  display: flex;
  gap: 8px;
  height: 14px;
  padding-left: 5px;
}
.tabs {
  display: flex;
  align-items: flex-end;
  height: 15px;
  border-top: 1px solid #ececec;
}
.tabs button {
  height: 13px;
  padding: 0 3px 0 4px;
  border: 1px solid #d9d9d9;
  border-left: 0;
  background: #f0f0f0;
}
.tabs button[aria-selected] {
  height: 14px;
  padding: 0 4px 0 5px;
  border-top-color: #fff;
  border-bottom: 0;
  background: #fff;
}
.list {
  position: relative;
  flex: 1;
  min-height: 0;
  overflow: hidden;
}
.list table { width: 100%; table-layout: fixed; border-collapse: separate; border-spacing: 0; }
.c-state { width: 75px; }
.c-num { width: 45px; }
.c-more { width: 11px; }
td, th { padding: 0; font-weight: 400; }
thead th {
  position: relative;
  height: 35px;
  padding: 0 4px 2px;
  vertical-align: bottom;
  text-align: right;
  line-height: 11px;
  color: #5b708c;
  border-right: 1px solid #dedede;
  border-bottom: 1px solid #a0a0a0;
}
thead th:nth-child(-n+2) { text-align: left; }
thead th:nth-child(2) { border-right: 0; }
thead th:last-child { padding-right: 0; border-right: 0; }
thead b { display: block; font-size: 9px; line-height: 13px; font-weight: 400; color: #222; }
thead .cpu {
  color: #5c3030;
  border: 1px solid #f58a68;
  border-radius: 2px 2px 0 0;
  border-bottom-color: #a0a0a0;
  background: linear-gradient(#fddace, #fab7a2);
  background-clip: padding-box;
}
.sort { position: absolute; left: 67px; top: 6px; color: #777; }
tbody tr { height: 17px; }
tbody:last-child tr:nth-child(3n) { height: 18px; }
tbody .group { height: 24px; }
.group th {
  padding: 2px 0 0 7px;
  text-align: left;
  font-size: 9px;
  color: #2a5fc4;
}
tbody td:nth-last-child(-n+5) {
  padding-right: 4px;
  text-align: right;
  white-space: nowrap;
  background: #fff4c4;
  border-right: 1px solid #f7e6a8;
}
tbody td.hot:nth-last-child(-n+5) { background: #f9ecaa; }
tbody .group td:nth-last-child(-n+5) { background: #fff9e6; }
tbody tr td:nth-last-child(5) {
  border-left: 1px solid #fa9468;
  border-right-color: #fa9468;
}
.proc { display: flex; align-items: center; gap: 4px; padding-left: 4px; white-space: nowrap; }
.proc .s { color: #888; margin-right: 2px; }
.list .vbar { position: absolute; right: 0; top: 35px; bottom: 0; }
.list .vbar .thumb { height: 36px; margin: 1px 0 auto; }
.manager > .hbar { padding: 0 11px 0 1px; }
.manager > .hbar .thumb { width: 291px; margin: 0 auto 0 2px; }
.actions {
  display: flex;
  align-items: center;
  justify-content: space-between;
  height: 31px;
  padding: 0 6px 0 4px;
  border-top: 1px solid #ddd;
}
.less { display: flex; align-items: center; gap: 3px; }
.less svg { width: 14px; height: 14px; }
.end {
  width: 51px;
  height: 13px;
  border: 1px solid #bfbfbf;
  background: #ccc;
  color: #838383;
}

/* Taskbar */
.taskbar {
  display: flex;
  justify-content: space-between;
  height: 23px;
  color: #7c8082;
  background: #000b12;
}
.taskbar button { display: grid; place-items: center; }
.taskbar svg { width: 12px; height: 12px; }
.taskbar .l { width: 15px; height: 15px; }
.system { display: grid; grid-template-columns: repeat(3, 30px); }
.apps {
  display: grid;
  grid-template-columns: repeat(7, 1fr);
  width: 214px;
  margin-right: auto;
}
.active { background: #191f25; }
.tray { display: flex; align-items: center; gap: 3px; padding-right: 14px; }
.lang { margin-left: 3px; }
.tray time { margin: 0 8px 0 3px; text-align: center; line-height: 11px; }
.notes { position: relative; }
.notes b {
  position: absolute;
  left: 5px;
  top: 4px;
  width: 9px;
  height: 9px;
  border-radius: 50%;
  line-height: 9px;
  text-align: center;
  font-weight: 400;
  background: #22282c;
}
```
